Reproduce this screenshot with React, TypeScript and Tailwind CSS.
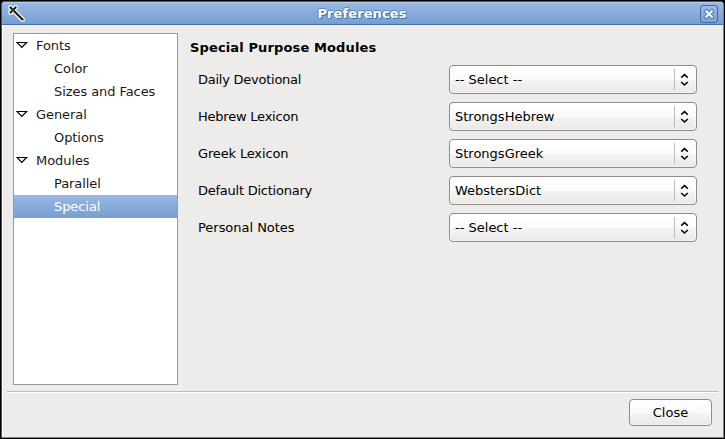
const tree = [
  { label: "Fonts", children: ["Color", "Sizes and Faces"] },
  { label: "General", children: ["Options"] },
  { label: "Modules", children: ["Parallel", "Special"] },
];

const fields = [
  { label: "Daily Devotional", value: "-- Select --", tracking: "tracking-[-0.25px]" },
  { label: "Hebrew Lexicon", value: "StrongsHebrew", tracking: "tracking-[-0.22px]" },
  { label: "Greek Lexicon", value: "StrongsGreek", tracking: "tracking-[-0.15px]" },
  { label: "Default Dictionary", value: "WebstersDict", tracking: "tracking-[-0.24px]" },
  { label: "Personal Notes", value: "-- Select --", tracking: "tracking-[-0.03px]" },
];

const buttonFace =
  "rounded-[4px] border border-[#8e8b88] bg-[linear-gradient(#ffffff,#fbfbfb_50%,#f4f4f3_52%,#e9e8e7)] shadow-[inset_0_0_0_1px_#ffffff88]";

function WandIcon() {
  return (
    <svg width="18" height="18" viewBox="0 0 18 18" className="mb-px ml-[5px]" fill="none">
      <path d="M3.5 3.5l12 12M8.5 3.5l-5 5" stroke="#eeeeea" strokeWidth="4.8" strokeLinecap="round" />
      <path d="M3.5 3.5l12 12M8.5 3.5l-5 5" stroke="#111" strokeWidth="1.9" strokeLinecap="square" />
      <circle cx="6" cy="6" r="0.6" fill="#ddd" />
    </svg>
  );
}

function CloseIcon() {
  return (
    <svg width="16" height="16" viewBox="0 0 16 16" fill="none">
      <path d="M5.2 5.2l5.6 5.6M10.8 5.2l-5.6 5.6" stroke="#5079b0" strokeWidth="4.2" strokeLinecap="square" />
      <path d="M5.2 5.2l5.6 5.6M10.8 5.2l-5.6 5.6" stroke="#f4f7fb" strokeWidth="2.2" strokeLinecap="square" />
    </svg>
  );
}

function Expander() {
  return (
    <svg width="12" height="8" viewBox="0 0 12 8" className="mr-[8px] mb-px ml-[2px]" fill="#fff">
      <path d="M1 1.5h9.6L5.8 6.5z" stroke="#000" strokeWidth="1.2" />
    </svg>
  );
}

function Select({ value }: { value: string }) {
  return (
    <button className={`flex h-[29px] w-[248px] items-center pl-[5px] text-left ${buttonFace}`}>
      <span className="flex-1">{value}</span>
      <span className="h-[21px] w-px bg-[#bdbbb9]" />
      <svg width="21" height="14" viewBox="0 0 21 14" fill="none" stroke="#000" strokeWidth="1.5">
        <path d="M6.2 4.6L9.5 1.6l3.3 3M6.2 9l3.3 3 3.3-3" />
      </svg>
    </button>
  );
}

export default function App() {
  return (
    <div className="h-[439px] w-[725px] overflow-hidden bg-black p-px font-['DejaVu_Sans',sans-serif] text-[13px] leading-[23px] text-black">
      <div className="flex h-[437px] w-[723px] flex-col overflow-hidden rounded-t-[4px] border border-t-[#3c557a] border-r-[#85827f] border-b-[#85827f] border-l-[#55534f] bg-[#edeceb]">
        <header className="flex h-[23px] shrink-0 items-center border-t border-b border-t-[#b5cdec] border-b-[#4671a7] bg-linear-to-b from-[#9ab8e3] to-[#759fd1]">
          <WandIcon />
          <h1 className="flex-1 pr-[1px] text-center text-[13px] font-bold tracking-[0.1px] text-white [text-shadow:1px_1px_0_#456fa5,-1px_0_0_#5d86ba,0_-1px_0_#5d86ba]">
            Preferences
          </h1>
          <button className="mr-[5px] flex size-[18px] items-center justify-center rounded-[3px] border border-[#41699f] bg-linear-to-b from-[#9dbce6] to-[#7ba4d6]">
            <CloseIcon />
          </button>
        </header>
        <div className="flex flex-1 flex-col border-l border-l-white">
          <main className="flex h-[360px] pt-[8px] pl-[10px]">
            <nav className="h-[352px] w-[165px] border border-[#9c9a97] bg-white tracking-[-0.07px] text-[#1a1a1a]">
              {tree.map((group) => (
                <div key={group.label}>
                  <div className="flex h-[23px] items-center">
                    <Expander />
                    {group.label}
                  </div>
                  {group.children.map((name) => (
                    <div
                      key={name}
                      className={`h-[23px] pl-[40px] ${name === "Special" ? "bg-linear-to-b from-[#9ab8e3] to-[#759fd1] text-white" : ""}`}
                    >
                      {name}
                    </div>
                  ))}
                </div>
              ))}
            </nav>
            <section className="pt-[3px] pl-[12px]">
              <h2 className="text-[13px] font-bold tracking-[0.13px]">Special Purpose Modules</h2>
              <div className="mt-[6px] flex flex-col gap-[8px] pl-[8px]">
                {fields.map(({ label, value, tracking }) => (
                  <div key={label} className="flex items-center">
                    <span className={`w-[251px] ${tracking}`}>{label}</span>
                    <Select value={value} />
                  </div>
                ))}
              </div>
            </section>
          </main>
          <hr className="mt-[6px] mr-[5px] ml-[4px] h-[2px] border-t border-b border-t-[#bfbdbb] border-b-white" />
          <footer className="flex justify-end pt-[6px] pr-[11px]">
            <button className={`h-[27px] w-[83px] leading-[25px] ${buttonFace}`}>Close</button>
          </footer>
        </div>
      </div>
    </div>
  );
}
